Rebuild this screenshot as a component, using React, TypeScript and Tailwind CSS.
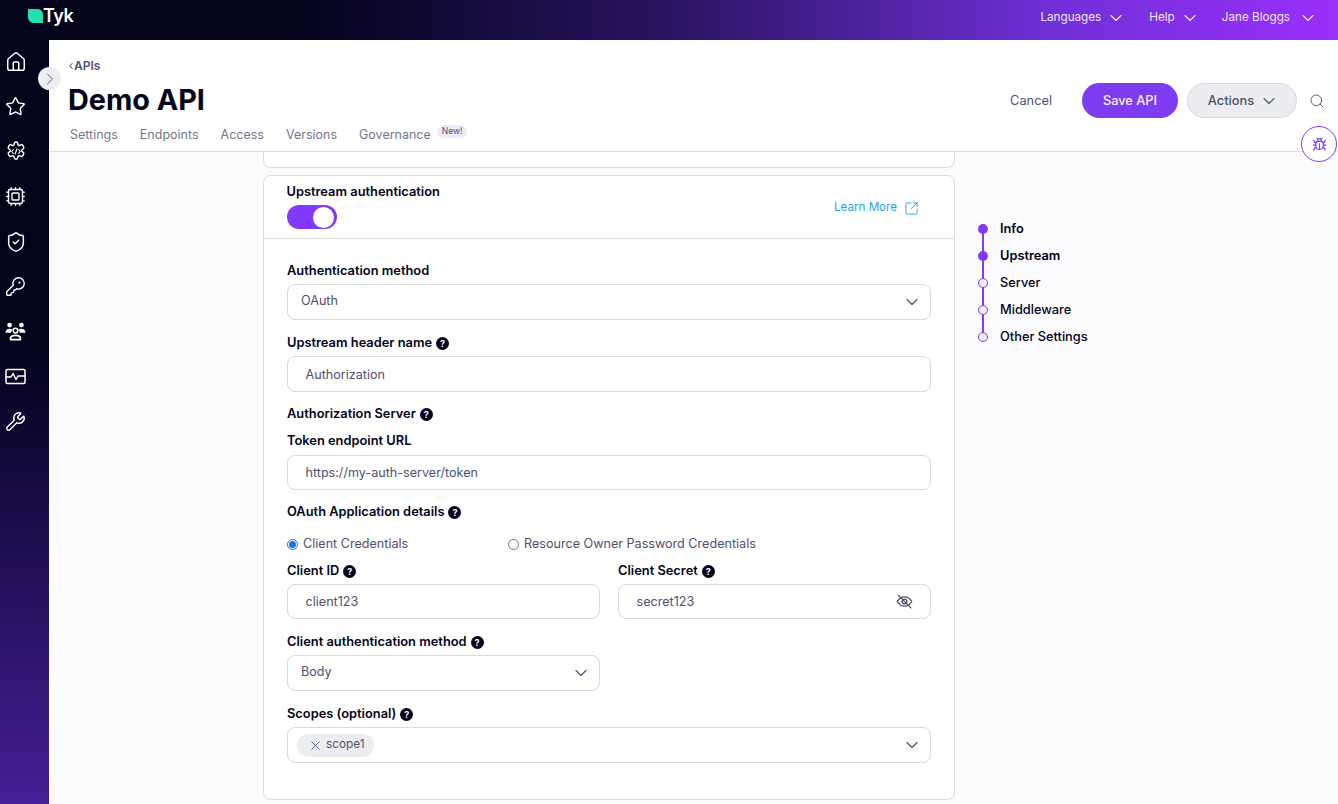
import React from "react";
import { ChevronDown, ChevronRight, ChevronLeft, Search, Bug, SquareArrowOutUpRight, X, House, Star, Cpu, ShieldCheck, KeyRound, Wrench } from "lucide-react";

function Help() {
  return (
    <span className="inline-flex h-[13px] w-[13px] items-center justify-center rounded-full bg-[#03031c] text-[9px] font-bold leading-none text-white">?</span>
  );
}

function Label({ children, help, className = "" }: { children: React.ReactNode; help?: boolean; className?: string }) {
  return (
    <div className={"flex h-4 items-center gap-[4px] text-[12.85px] font-semibold leading-4 text-[#03031c] " + className}>
      <span>{children}</span>
      {help && <Help />}
    </div>
  );
}

function Field({ children, className = "" }: { children: React.ReactNode; className?: string }) {
  return (
    <div className={"flex h-9 items-center rounded-lg border border-[#d8d8df] bg-white text-[12.6px] text-[#505071] " + className}>
      {children}
    </div>
  );
}

function Input({ children, className = "" }: { children: React.ReactNode; className?: string }) {
  return (
    <Field className={"pl-[17.5px] " + className}>
      <span className="mt-[2px]">{children}</span>
    </Field>
  );
}

function Select({ value, className = "" }: { value: string; className?: string }) {
  return (
    <Field className={"justify-between pl-[13px] pr-[8px] " + className}>
      <span className="-mt-[2px]">{value}</span>
      <ChevronDown size={20} strokeWidth={1.4} className="text-[#505071]" />
    </Field>
  );
}

function GearCode() {
  return (
    <svg width="20" height="21" viewBox="0 0 24 24" fill="none" stroke="white" strokeWidth="1.7" strokeLinecap="round" strokeLinejoin="round">
      <path d="M9.9 2.6a2 2 0 0 1 4.2 0l.2 1a1.5 1.5 0 0 0 2.2 1l.9-.5a2 2 0 0 1 2.7.6l.9 1.6a2 2 0 0 1-.7 2.8l-.8.5a1.5 1.5 0 0 0 0 2.6l.8.5a2 2 0 0 1 .7 2.8l-.9 1.6a2 2 0 0 1-2.7.6l-.9-.5a1.5 1.5 0 0 0-2.2 1l-.2 1a2 2 0 0 1-4.2 0l-.2-1a1.5 1.5 0 0 0-2.2-1l-.9.5a2 2 0 0 1-2.7-.6l-.9-1.6a2 2 0 0 1 .7-2.8l.8-.5a1.5 1.5 0 0 0 0-2.6l-.8-.5a2 2 0 0 1-.7-2.8l.9-1.6a2 2 0 0 1 2.7-.6l.9.5a1.5 1.5 0 0 0 2.2-1z" />
      <path d="M8.8 9.6 6.8 12l2 2.400M15.200 9.600l2 2.400-2 2.400M13 9l-2 6" strokeWidth="1.4" />
    </svg>
  );
}

function Team() {
  return (
    <svg width="23" height="20" viewBox="0 0 24 22" fill="white" stroke="white" strokeLinecap="round" strokeLinejoin="round">
      <circle cx="5.500" cy="4.500" r="2.600" stroke="none" />
      <circle cx="18.500" cy="4.500" r="2.600" stroke="none" />
      <path d="M1 13c0-3 2-4.600 4.500-4.600 1.400 0 2.500.5 3.300 1.300-1 .8-1.500 1.900-1.500 3.300z" stroke="none" />
      <path d="M23 13c0-3-2-4.600-4.500-4.600-1.400 0-2.500.5-3.300 1.300 1 .8 1.500 1.900 1.500 3.300z" stroke="none" />
      <circle cx="12" cy="10.500" r="2.600" fill="none" strokeWidth="1.700" />
      <path d="M6.500 20.500v-1c0-2.300 2.200-3.700 5.500-3.700s5.500 1.400 5.500 3.700v1z" fill="none" strokeWidth="1.700" />
    </svg>
  );
}

function Monitor() {
  return (
    <svg width="21" height="17" viewBox="0 0 21 17" fill="none" stroke="white" strokeWidth="1.500" strokeLinejoin="round" strokeLinecap="round">
      <rect x="1" y="1.500" width="19" height="14" rx="1.500" />
      <path d="M1 9h5l2-3.500 3 6 2-3.500h7" />
    </svg>
  );
}

function EyeSlash() {
  return (
    <svg width="17" height="17" viewBox="0 0 24 24" fill="none" stroke="#505071" strokeWidth="1.900" strokeLinecap="round" strokeLinejoin="round">
      <path d="M1.800 12S5.500 5.500 12 5.500 22.200 12 22.200 12 18.500 18.500 12 18.500 1.800 12 1.800 12z" />
      <circle cx="12" cy="12" r="3.300" />
      <path d="M3 3l18 18" />
    </svg>
  );
}

function StepDot({ filled }: { filled: boolean }) {
  return filled ? (
    <span className="z-10 h-[10px] w-[10px] rounded-full bg-[#8438fa]" />
  ) : (
    <span className="z-10 h-[10px] w-[10px] rounded-full border border-[#8438fa] bg-[#efeefc]" />
  );
}

const steps = [
  { name: "Info", active: true },
  { name: "Upstream", active: true },
  { name: "Server", active: false },
  { name: "Middleware", active: false },
  { name: "Other Settings", active: false },
];

export default function App() {
  return (
    <div className="flex h-[804px] w-[1338px] flex-col overflow-hidden bg-white text-[#03031c] [font-family:Inter,'Liberation_Sans',sans-serif]">
      {/* top bar */}
      <header className="flex h-10 shrink-0 items-center justify-between bg-[linear-gradient(90deg,#03031c_0%,#03031c_22%,#2a1460_50%,#6f2fd6_78%,#9a2ffa_100%)] pl-[28px] pr-[20px]">
        <div className="-mt-[9px] flex items-center">
          <svg width="15" height="14" viewBox="0 0 15 14">
            <path d="M0 0h9c3.500 0 6 2.500 6 6v8H6c-3.500 0-6-2.500-6-6z" fill="#23e2b0" />
          </svg>
          <span className="text-[18px] font-semibold leading-5 tracking-[-0.5px] text-white">Tyk</span>
        </div>
        <nav className="-mt-[5px] flex items-center text-[11.7px] text-[#ece6fb]">
          <span>Languages</span>
          <ChevronDown size={20} strokeWidth={1.4} className="ml-[5px]" />
          <span className="ml-[23px]">Help</span>
          <ChevronDown size={20} strokeWidth={1.4} className="ml-[5px]" />
          <span className="ml-[22px]">Jane Bloggs</span>
          <ChevronDown size={20} strokeWidth={1.4} className="ml-[8px]" />
        </nav>
      </header>

      <div className="flex min-h-0 flex-1">
        {/* sidebar */}
        <aside className="relative z-10 flex w-[49px] shrink-0 flex-col items-center bg-[linear-gradient(180deg,#03031c_0%,#03031c_40%,#1a0c48_62%,#451f96_100%)] pr-[18px] pt-[10.5px] text-white">
          <div className="flex flex-col items-center">
            <div className="flex h-[45px] w-6 items-start justify-center"><House size={22} strokeWidth={1.600} /></div>
            <div className="flex h-[45px] w-6 items-start justify-center"><Star size={21} strokeWidth={1.600} /></div>
            <div className="flex h-[45px] w-6 items-start justify-center"><GearCode /></div>
            <div className="flex h-[45px] w-6 items-start justify-center"><Cpu size={21} strokeWidth={1.600} /></div>
            <div className="flex h-[45px] w-6 items-start justify-center"><ShieldCheck size={22} strokeWidth={1.600} /></div>
            <div className="flex h-[45px] w-6 items-start justify-center"><KeyRound size={21} strokeWidth={1.600} /></div>
            <div className="flex h-[45px] w-6 items-start justify-center"><Team /></div>
            <div className="flex h-[45px] w-6 items-start justify-center pt-[2px]"><Monitor /></div>
            <div className="flex h-[45px] w-6 items-start justify-center"><Wrench size={21} strokeWidth={1.600} /></div>
          </div>
          <button className="absolute left-[38px] top-[27px] flex h-[23px] w-[23px] items-center justify-center rounded-full bg-[#ecedf0] text-[#505071]">
            <ChevronRight size={20} strokeWidth={1.100} />
          </button>
        </aside>

        <main className="flex min-w-0 flex-1 flex-col">
          {/* page header */}
          <div className="relative h-[112px] shrink-0 border-b border-[#dcdce2] bg-white pl-[19px]">
            <div className="flex items-center pt-[19px] text-xs font-semibold leading-[14px] text-[#505071]">
              <ChevronLeft size={10} strokeWidth={2.500} className="-ml-[2px] -mr-[2px]" />
              <span>APIs</span>
            </div>
            <h1 className="mt-[10px] text-[28.8px] font-bold leading-[34px] text-[#03031c]">Demo API</h1>
            <div className="mt-[9px] flex items-center gap-[22px] pl-[2px] text-[12.5px] leading-4 text-[#76768f]">
              <span>Settings</span>
              <span>Endpoints</span>
              <span>Access</span>
              <span>Versions</span>
              <span className="flex items-start">
                <span className="mt-[1px]">Governance</span>
                <span className="-mt-[1px] ml-[6px] rounded-full bg-[#efe9fc] px-[5px] text-[8.5px] leading-[13px] text-[#505071]">New!</span>
              </span>
            </div>
            <div className="absolute right-[13px] top-[43px] flex items-center text-[12.8px]">
              <span className="mr-[30px] text-[#505071]">Cancel</span>
              <button className="mr-[9px] h-[35px] w-[96px] rounded-full bg-[#7e3cf0] font-medium text-[#f4f0ff]">Save API</button>
              <button className="flex h-[35px] w-[110px] items-center justify-center gap-[5px] rounded-full border border-[#d8d8df] bg-[#ecedf0] pl-[3px] font-medium text-[#505071]">
                Actions <ChevronDown size={20} strokeWidth={1.400} />
              </button>
              <Search size={16} strokeWidth={1.400} className="ml-[12px] text-[#505071]" />
            </div>
            <button className="absolute right-[1px] top-[86px] z-10 flex h-9 w-9 items-center justify-center rounded-full border border-[#8438fa] bg-white">
              <Bug size={15} strokeWidth={1.800} className="text-[#8438fa]" />
            </button>
          </div>

          {/* content */}
          <div className="flex min-h-0 flex-1 items-start bg-[#fbfbfd] pl-[214px]">
            <div className="w-[692px] shrink-0">
              <div className="h-4 rounded-b-lg border border-t-0 border-[#dcdce2] bg-white" />
              <section className="mt-[7px] h-[625px] rounded-lg border border-[#dcdce2] bg-white">
                <div className="flex h-[63px] justify-between border-b border-[#dcdce2] pl-[22.500px] pr-[35px]">
                  <div>
                    <Label className="mt-[8px]">Upstream authentication</Label>
                    <div className="mt-[5px] flex h-6 w-[50px] items-center justify-end rounded-full bg-[#8438fa] pr-[3px]">
                      <span className="h-[21px] w-[21px] rounded-full bg-white" />
                    </div>
                  </div>
                  <a className="mt-[24px] flex h-4 items-center gap-[7px] text-[11.600px] text-[#1ba6ee]">
                    Learn More <SquareArrowOutUpRight size={15} strokeWidth={1.500} />
                  </a>
                </div>

                <div className="px-[23px] pt-[24px]">
                  <Label>Authentication method</Label>
                  <Select value="OAuth" className="mt-[5px]" />

                  <Label help className="mt-[15px]">Upstream header name</Label>
                  <Input className="mt-[5px]">Authorization</Input>

                  <Label help className="mt-[14px]">Authorization Server</Label>
                  <Label className="mt-[11px]">Token endpoint URL</Label>
                  <Input className="mt-[6px] h-[35px]">https://my-auth-server/token</Input>

                  <Label help className="mt-[14px]">OAuth Application details</Label>

                  <div className="mt-[16px] flex h-4 items-center text-[12.6px] text-[#505071]">
                    <span className="flex w-[221px] items-center gap-[5px]">
                      <span className="flex h-[11px] w-[11px] items-center justify-center rounded-full border border-[#1a73e8] bg-white">
                        <span className="h-[7px] w-[7px] rounded-full bg-[#1a73e8]" />
                      </span>
                      Client Credentials
                    </span>
                    <span className="flex items-center gap-[5px]">
                      <span className="h-[11px] w-[11px] rounded-full border border-[#767676] bg-white" />
                      Resource Owner Password Credentials
                    </span>
                  </div>

                  <div className="mt-[11px] grid grid-cols-2 gap-x-[18px]">
                    <div>
                      <Label help>Client ID</Label>
                      <Input className="mt-[5px] h-[35px]">client123</Input>
                    </div>
                    <div>
                      <Label help>Client Secret</Label>
                      <Field className="mt-[5px] h-[35px] justify-between pl-[17.5px] pr-[17px]">
                        <span className="mt-[2px]">secret123</span>
                        <EyeSlash />
                      </Field>
                    </div>
                  </div>

                  <Label help className="mt-[15px]">Client authentication method</Label>
                  <Select value="Body" className="mt-[5px] w-[313px]" />

                  <Label help className="mt-[15px]">Scopes (optional)</Label>
                  <Field className="mt-[5px] justify-between pl-[9px] pr-[8px]">
                    <span className="flex h-[23px] items-center gap-[3.5px] rounded-full bg-[#ecedf0] pl-[10.5px] pr-[9px] text-[11.800px]">
                      <X size={15} strokeWidth={1.400} />
                      scope1
                    </span>
                    <ChevronDown size={20} strokeWidth={1.400} />
                  </Field>
                </div>
              </section>
            </div>

            {/* steps */}
            <div className="relative ml-[22.500px] mt-[69px] flex flex-col gap-[11px]">
              <div className="absolute bottom-[8px] left-[4px] top-[8px] w-[2px] bg-[#8438fa]" />
              {steps.map((s) => (
                <div key={s.name} className="flex h-4 items-center gap-[12.500px]">
                  <StepDot filled={s.active} />
                  <span className={"text-[12.800px] leading-4 text-[#03031c] " + (s.active ? "font-semibold" : "font-medium")}>{s.name}</span>
                </div>
              ))}
            </div>
          </div>
        </main>
      </div>
    </div>
  );
}
